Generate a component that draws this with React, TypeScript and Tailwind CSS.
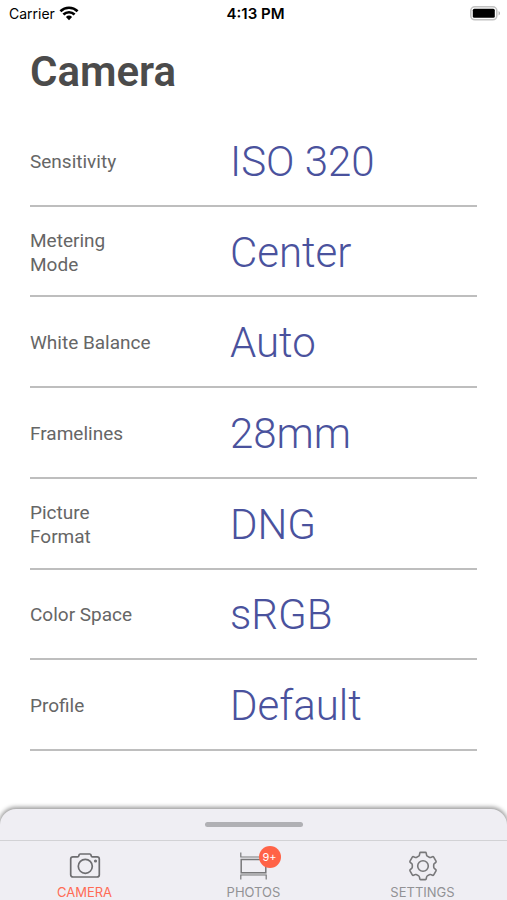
import React from 'react';
import clsx from 'clsx';

const settings = [
  { label: 'Sensitivity', value: 'ISO 320' },
  { label: 'Metering Mode', value: 'Center' },
  { label: 'White Balance', value: 'Auto' },
  { label: 'Framelines', value: '28mm' },
  { label: 'Picture Format', value: 'DNG' },
  { label: 'Color Space', value: 'sRGB' },
  { label: 'Profile', value: 'Default' },
];

function WifiIcon() {
  return (
    <svg className="h-4 w-5" viewBox="0 0 20 16" fill="none" stroke="#000" strokeWidth="2.6" aria-hidden="true">
      <path d="M1.4 5.2a12.4 12.4 0 0 1 17.2 0" />
      <path d="M4.4 8.5a8 8 0 0 1 11.2 0" />
      <path d="M6.9 11a4.5 4.5 0 0 1 6.2 0L10 14.2Z" fill="#000" stroke="none" />
    </svg>
  );
}

function BatteryIcon() {
  return (
    <svg className="h-4 w-8" viewBox="0 0 32 16" aria-hidden="true">
      <rect x="0.8" y="0.8" width="26" height="13" rx="4" fill="#fff" stroke="#c2c2c2" strokeWidth="1.6" />
      <rect x="2.8" y="2.8" width="22" height="9" rx="1.5" fill="#000" />
      <path d="M28.6 5.1c1.8.7 1.8 3.7 0 4.4Z" fill="#a8a8a8" />
    </svg>
  );
}

function CameraIcon() {
  return (
    <svg className="h-8 w-8" viewBox="0 0 32 32" fill="none" stroke="#6d6d70" strokeWidth="1.7" strokeLinejoin="round" aria-hidden="true">
      <path d="M4 6.8h4.6c.7 0 1.1-.3 1.2-.9l.2-.9c.2-.7.6-1 1.2-1h9.600c.6 0 1 .3 1.200 1l.2.9c.1.6.5.9 1.200.9H28c1.400 0 2.300.9 2.300 2.300v15.600c0 1.400-.9 2.300-2.300 2.300H4c-1.400 0-2.300-.9-2.300-2.300V9.100c0-1.400.9-2.300 2.300-2.300Z" />
      <circle cx="16.3" cy="16.3" r="7" />
      <circle cx="26.5" cy="11" r="0.7" />
    </svg>
  );
}

function FilmIcon() {
  return (
    <svg className="h-8 w-8" viewBox="0 0 32 32" fill="none" stroke="#78787a" strokeWidth="1.2" aria-hidden="true">
      <path d="M2.8 2.5V7h25.400V2.500" />
      <path d="M2.8 29.500V25h25.400v4.500" />
      <path d="M3.200 9.500h24.600v13.300H3.200Z" strokeWidth="1.5" />
      <path d="M2.800 24h25.400" stroke="#a9a9ac" />
    </svg>
  );
}

function GearIcon() {
  return (
    <svg className="h-8 w-8" viewBox="0 0 32 32" fill="none" stroke="#78787a" strokeWidth="1.6" strokeLinejoin="round" aria-hidden="true">
      <path d="M13.6 2.4h4.8q.7 0 .8.7l.4 2q.1.7.7 1l2 1.2q.6.4 1.3.1l1.9-.7q.8-.2 1.2.5l2.3 4q.4.7-.2 1.2l-1.5 1.3q-.6.5-.6 1.2v2.2q0 .7.6 1.2l1.5 1.3q.6.5.2 1.2l-2.3 4q-.4.7-1.2.5l-1.9-.7q-.7-.3-1.3.1l-2 1.2q-.6.3-.7 1l-.4 2q-.1.7-.8.7h-4.8q-.7 0-.8-.7l-.4-2q-.1-.7-.7-1l-2-1.2q-.6-.4-1.3-.1l-1.9.7q-.8.2-1.2-.5l-2.3-4q-.4-.7.2-1.2l1.5-1.3q.6-.5.6-1.2v-2.2q0-.7-.6-1.2l-1.5-1.3q-.6-.5-.2-1.2l2.3-4q.4-.7 1.2-.5l1.9.7q.7.3 1.3-.1l2-1.2q.6-.3.7-1l.4-2q.1-.7.8-.7Z" />
      <circle cx="16" cy="16" r="5.3" />
    </svg>
  );
}

const tabs = [
  { name: 'CAMERA', icon: <CameraIcon />, active: true },
  { name: 'PHOTOS', icon: <FilmIcon />, badge: '9+' },
  { name: 'SETTINGS', icon: <GearIcon /> },
];

function StatusBar() {
  return (
    <header className="grid h-7 grid-cols-3 items-center pr-[5px] pl-[9px] font-[Inter,sans-serif] text-sm text-black">
      <div className="flex items-center gap-1">
        <span>Carrier</span>
        <WifiIcon />
      </div>
      <span className="text-center text-[15px] font-semibold">4:13 PM</span>
      <div className="flex justify-end">
        <BatteryIcon />
      </div>
    </header>
  );
}

function TabBar() {
  return (
    <footer className="overflow-hidden pt-2">
      <div className="rounded-t-2xl bg-[#efeef3] shadow-[0_-1px_4px_1px_rgba(0,0,0,0.4)]">
        <div className="flex h-8 items-center justify-center border-b border-[#d2d2d5]">
          <div className="h-[5px] w-[98px] rounded-full bg-[#b0b0b4]" />
        </div>
        <nav className="grid grid-cols-3 font-[Inter,sans-serif]">
          {tabs.map((tab) => (
            <button key={tab.name} className="flex h-[59px] flex-col items-center pt-[9px]">
              <span className="relative">
                {tab.icon}
                {tab.badge && (
                  <span className="absolute -top-1 left-[21px] flex h-[22px] w-[22px] items-center justify-center rounded-full bg-[#ff6347] text-[11px] text-white">
                    {tab.badge}
                  </span>
                )}
              </span>
              <span className={clsx('text-[13px] leading-5', tab.active ? 'text-[#ff6b55]' : 'text-[#929295]')}>
                {tab.name}
              </span>
            </button>
          ))}
        </nav>
      </div>
    </footer>
  );
}

export default function App() {
  return (
    <div className="flex min-h-screen flex-col bg-white font-[Roboto,sans-serif]">
      <StatusBar />
      <main className="flex flex-1 flex-col px-[30px] pb-[50px]">
        <h1 className="py-4 text-[42px] leading-[56px] font-semibold text-[#4b4b4b]">Camera</h1>
        <ul className="flex flex-1 flex-col">
          {settings.map((item) => (
            <li key={item.label} className="flex flex-1 border-b-2 border-[#bebebe]">
              <button className="flex flex-1 items-center pt-[3px] text-left">
                <span className="w-[200px] shrink-0 pr-[76px] text-[19px] leading-6 text-[#666]">
                  {item.label}
                </span>
                <span className="text-[42px] leading-[56px] font-light text-[#4a529d]">{item.value}</span>
              </button>
            </li>
          ))}
        </ul>
      </main>
      <TabBar />
    </div>
  );
}
